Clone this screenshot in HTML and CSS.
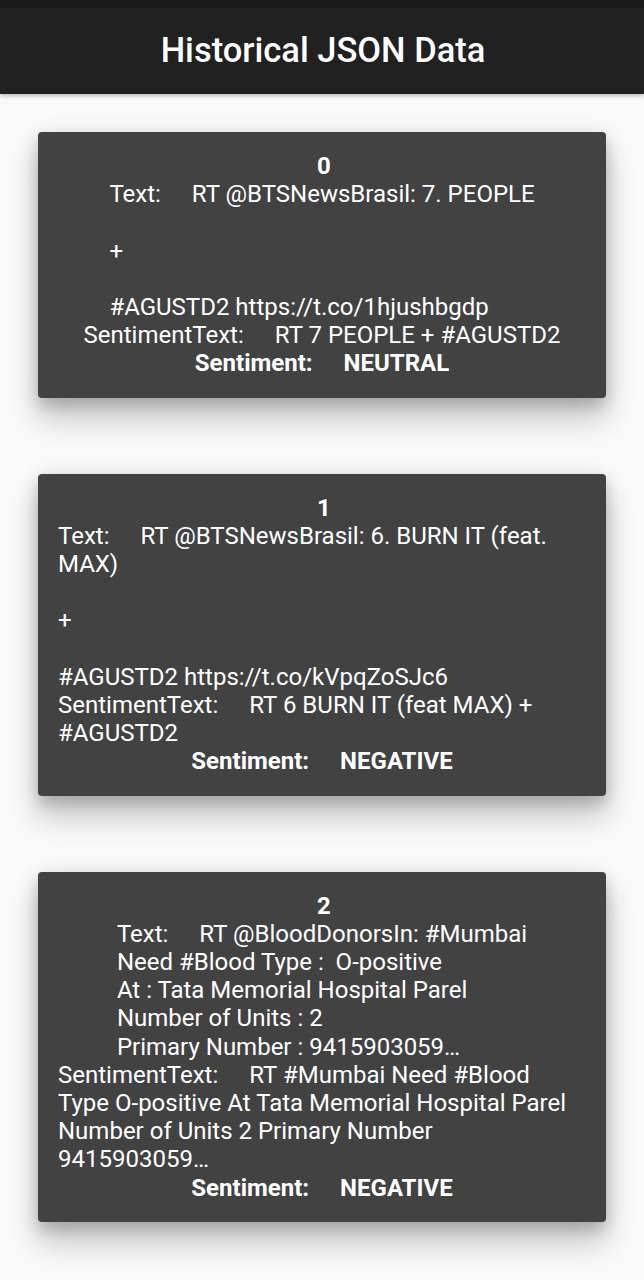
FILE: index.html
```html
<!DOCTYPE html>
<html>
<head>
<meta charset="utf-8">
<link rel="stylesheet" href="styles.css">
</head>
<body>
<div class="statusbar"></div>
<header class="appbar"><h1 class="title">Historical JSON Data</h1></header>
<main class="list">
  <section class="card">
    <div class="index">0</div>
    <div class="field"><span class="label">Text:</span>RT @BTSNewsBrasil: 7. PEOPLE

+

#AGUSTD2 https://t.co/1hjushbgdp</div>
    <div class="field"><span class="label">SentimentText:</span>RT 7 PEOPLE + #AGUSTD2</div>
    <div class="field sentiment"><span class="label">Sentiment:</span>NEUTRAL</div>
  </section>
  <section class="card">
    <div class="index">1</div>
    <div class="field"><span class="label">Text:</span>RT @BTSNewsBrasil: 6. BURN IT (feat. MAX)

+

#AGUSTD2 https://t.co/kVpqZoSJc6</div>
    <div class="field"><span class="label">SentimentText:</span>RT 6 BURN IT (feat MAX) + #AGUSTD2</div>
    <div class="field sentiment"><span class="label">Sentiment:</span>NEGATIVE</div>
  </section>
  <section class="card">
    <div class="index">2</div>
    <div class="field"><span class="label">Text:</span>RT @BloodDonorsIn: #Mumbai
Need #Blood Type :  O-positive
At : Tata Memorial Hospital Parel
Number of Units : 2
Primary Number : 9415903059…</div>
    <div class="field"><span class="label">SentimentText:</span>RT #Mumbai Need #Blood Type O-positive At Tata Memorial Hospital Parel Number of Units 2 Primary Number 9415903059…</div>
    <div class="field sentiment"><span class="label">Sentiment:</span>NEGATIVE</div>
  </section>
</main>
</body>
</html>
```

FILE: styles.css
```css
html, body {
  margin: 0;
  padding: 0;
}
body {
  background: #fafafa;
  font-family: Roboto, "Liberation Sans", sans-serif;
  color: #fff;
  width: 644px;
  height: 1280px;
  overflow: hidden;
}
.statusbar {
  height: 8px;
  background: #1a1a1a;
}
.appbar {
  height: 86px;
  background: #212121;
  display: flex;
  align-items: center;
  justify-content: center;
  box-shadow: 0 2px 4px rgba(0,0,0,0.25);
  position: relative;
  z-index: 1;
}
.title {
  margin: 0;
  font-size: 34.5px;
  font-weight: 500;
  color: #fff;
  padding-bottom: 3px;
  padding-left: 2px;
}
.list {
  display: flex;
  flex-direction: column;
  padding: 38px 38px 0;
  gap: 76px;
}
.card {
  background: #424242;
  border-radius: 4px;
  padding: 20px;
  display: flex;
  flex-direction: column;
  align-items: center;
  font-size: 24px;
  line-height: 28.2px;
  box-shadow: 0 20px 30px 2px rgba(0,0,0,0.2), 0 8px 14px rgba(0,0,0,0.14), 0 0 22px rgba(0,0,0,0.08);
}
.index {
  font-weight: 700;
  padding-left: 4px;
}
.field {
  white-space: pre-wrap;
  text-align: left;
  max-width: 100%;
}
.label {
  padding-right: 31px;
}
.sentiment {
  font-weight: 700;
}
```
